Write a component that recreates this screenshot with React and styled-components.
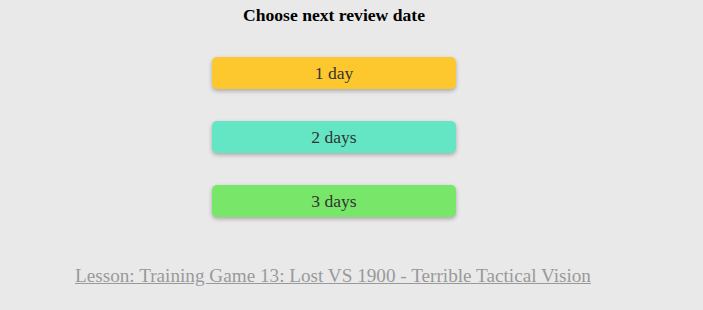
import React from "react";
import styled, { createGlobalStyle } from "styled-components";

const Global = createGlobalStyle`
  html, body { margin: 0; padding: 0; background: #e9e9e9; }
  body { font-family: "Liberation Serif", "Times New Roman", serif; }
`;

const Page = styled.div`
  width: 668px;
  display: flex;
  flex-direction: column;
  align-items: center;
  padding-top: 5px;
`;

const Title = styled.h3`
  margin: 0;
  font-size: 17.6px;
  line-height: 20px;
  font-weight: bold;
  color: #000;
`;

const Choices = styled.div`
  display: flex;
  flex-direction: column;
  gap: 32px;
  margin-top: 32px;
`;

const Choice = styled.button`
  width: 244px;
  height: 32px;
  border: none;
  border-radius: 5px;
  background: ${(p) => p.$bg};
  box-shadow: 0 2px 4px rgba(0, 0, 0, 0.28);
  font-family: "Liberation Serif", "Times New Roman", serif;
  font-size: 17.6px;
  color: #333;
  cursor: pointer;
  padding: 0;
`;

const Footer = styled.div`
  align-self: stretch;
  padding-left: 75px;
  margin-top: 48px;
`;

const LessonLink = styled.a`
  font-size: 19.2px;
  line-height: 22px;
  color: #999;
  text-decoration: underline;
`;

const options = [
  { label: "1 day", bg: "#fcc82e" },
  { label: "2 days", bg: "#64e6c4" },
  { label: "3 days", bg: "#78e668" },
];

export default function App() {
  return (
    <>
      <Global />
      <Page>
        <Title>Choose next review date</Title>
        <Choices>
          {options.map((o) => (
            <Choice key={o.label} $bg={o.bg}>
              {o.label}
            </Choice>
          ))}
        </Choices>
        <Footer>
          <LessonLink href="#">
            Lesson: Training Game 13: Lost VS 1900 - Terrible Tactical Vision
          </LessonLink>
        </Footer>
      </Page>
    </>
  );
}
